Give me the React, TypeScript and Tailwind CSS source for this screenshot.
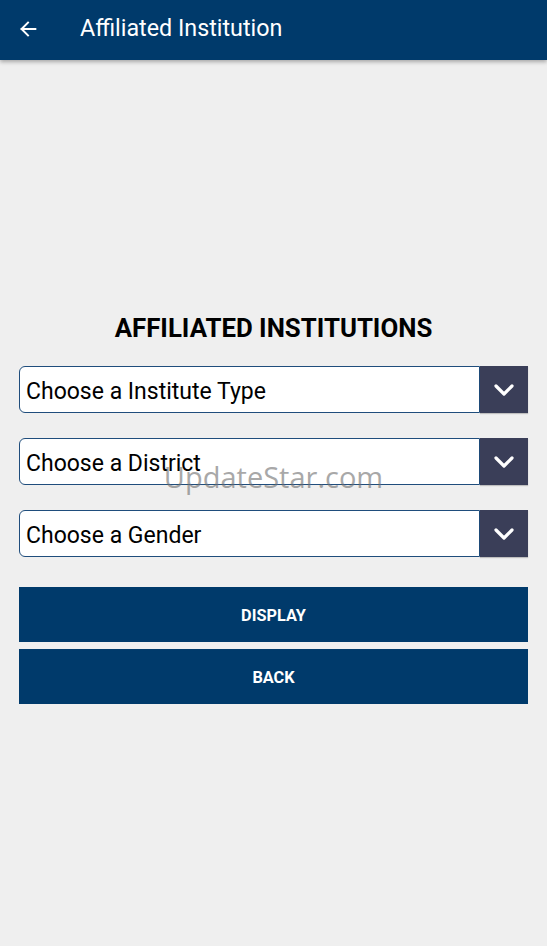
import React from "react";

function Chevron() {
  return (
    <svg width="22" height="14" viewBox="0 0 22 14" fill="none">
      <path d="M3 3 L11 11 L19 3" stroke="white" strokeWidth="3.2" strokeLinecap="round" strokeLinejoin="round" />
    </svg>
  );
}

function Select({ label }: { label: string }) {
  return (
    <div className="flex h-[47px] w-full">
      <div className="flex flex-1 items-center rounded-l-[6px] border-[1.5px] border-[#1f4d7c] bg-white pl-[6px] pt-[3px]">
        <span className="text-[23px] leading-none text-black">{label}</span>
      </div>
      <div className="flex w-[48px] items-center justify-center bg-[#3a3e58] shadow-[0_1px_1px_rgba(0,0,0,0.2)]">
        <Chevron />
      </div>
    </div>
  );
}

export default function App() {
  return (
    <div className="relative min-h-[946px] w-full bg-[#efefef] font-['Roboto',sans-serif]">
      <header className="flex h-[60px] items-center bg-[#003a6b] pb-[3px] shadow-[0_2px_4px_rgba(0,0,0,0.3)]">
        <div className="flex w-[80px] items-center pl-[17px]">
          <svg width="22" height="22" viewBox="0 0 24 24" fill="none">
            <path d="M20 12H5M12 5l-7 7 7 7" stroke="white" strokeWidth="2.2" strokeLinecap="square" />
          </svg>
        </div>
        <h1 className="text-[23.3px] font-normal text-white">Affiliated Institution</h1>
      </header>

      <div className="flex flex-col px-[19px] pt-[252px]">
        <h2 className="text-center text-[25.8px] font-bold leading-[32px] text-black">AFFILIATED INSTITUTIONS</h2>
        <div className="mt-[22px] flex flex-col gap-[25px]">
          <Select label="Choose a Institute Type" />
          <Select label="Choose a District" />
          <Select label="Choose a Gender" />
        </div>
        <div className="mt-[30px] flex flex-col gap-[7px]">
          <button className="flex h-[55px] items-center justify-center bg-[#003a6b] pt-[3px] text-[16.3px] font-bold text-white">DISPLAY</button>
          <button className="flex h-[55px] items-center justify-center bg-[#003a6b] pt-[3px] text-[16.3px] font-bold text-white">BACK</button>
        </div>
      </div>

      <div className="pointer-events-none absolute left-0 top-[455px] w-full text-center font-['Open_Sans',sans-serif] text-[29px] text-[#6f6f6f] opacity-60">
        UpdateStar.com
      </div>
    </div>
  );
}
